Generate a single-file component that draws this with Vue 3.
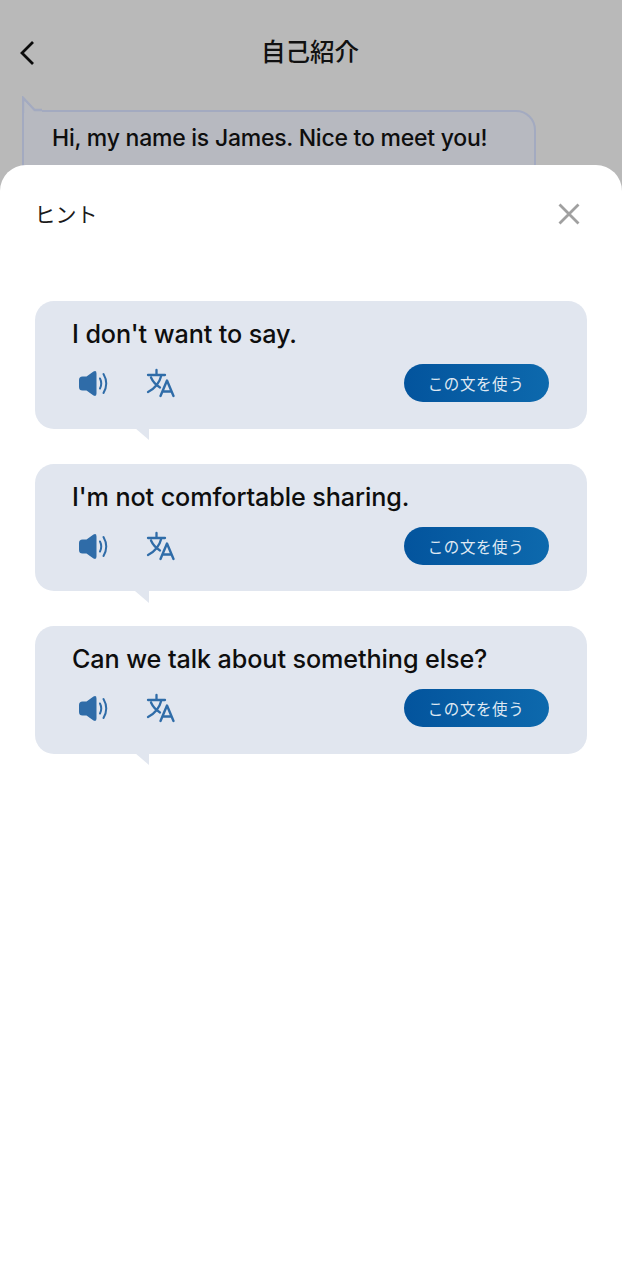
<script setup>
const hints = [
  "I don't want to say.",
  "I'm not comfortable sharing.",
  'Can we talk about something else?',
];
</script>

<template>
  <div class="page">
    <div class="backdrop">
      <header class="nav">
        <svg class="back" width="18" height="28" viewBox="0 0 18 28">
          <path d="M15 3 L4 14 L15 25" fill="none" stroke="#0b0b0b" stroke-width="2.8" />
        </svg>
        <h1>自己紹介</h1>
      </header>
      <div class="bubble">
        <svg class="bubble-tail" width="20" height="17" viewBox="0 0 20 17">
          <path d="M1.2 17 L1.2 2 L12.5 14 L20 14" fill="#b7b9c0" stroke="#a3aac0" stroke-width="2.5" />
          <path d="M2.5 17 L2.5 5 L12 15.3 L20 15.3 L20 17 Z" fill="#b7b9c0" />
        </svg>
        Hi, my name is James. Nice to meet you!
      </div>
    </div>

    <section class="sheet">
      <div class="sheet-head">
        <span class="sheet-title">ヒント</span>
        <svg width="24" height="24" viewBox="0 0 24 24">
          <path d="M2.5 2.5 L21.5 21.5 M21.5 2.5 L2.5 21.5" stroke="#a0a0a0" stroke-width="2.8" fill="none" />
        </svg>
      </div>

      <div class="hints">
        <div v-for="hint in hints" :key="hint" class="card">
          <p class="hint-text">{{ hint }}</p>
          <div class="actions">
            <svg class="speaker" width="32" height="28" viewBox="0 0 32 28">
              <path d="M2 11 Q2 7.5 5.5 7.5 L9.5 7.5 L16.5 2.5 Q19.5 1 19.5 4.5 L19.5 24.5 Q19.5 28 16.5 26.5 L9.5 21.5 L5.5 21.5 Q2 21.5 2 18 Z" fill="#2f6ca8" />
              <path d="M23 9.5 Q25.5 14.5 23 19.5 M26.5 5 Q32 14.5 26.5 24" fill="none" stroke="#2f6ca8" stroke-width="2" stroke-linecap="round" />
            </svg>
            <svg class="translate" width="30" height="30" viewBox="0 0 30 30">
              <path d="M2 7 H19 M10.5 2 V7 M15.5 7 C13.5 15 8 21 2 24 M5 9.5 C7 14 10 17 14 19.5" fill="none" stroke="#2f6ca8" stroke-width="2.3" stroke-linecap="round" />
              <path d="M14.5 28 L21 12.5 L27.5 28 M16.8 23.5 H25.2" fill="none" stroke="#2f6ca8" stroke-width="2.4" stroke-linecap="round" stroke-linejoin="round" />
            </svg>
            <button class="use-btn">この文を使う</button>
          </div>
          <svg class="card-tail" width="14" height="12" viewBox="0 0 14 12">
            <path d="M0 0 H14 V12 Z" fill="#e1e6ef" />
          </svg>
        </div>
      </div>
    </section>
  </div>
</template>

<style scoped>
.page {
  width: 622px;
  height: 1280px;
  position: relative;
  overflow: hidden;
  background: #fff;
  font-family: Inter, 'Noto Sans CJK JP', sans-serif;
}

.backdrop {
  height: 200px;
  background: #b9b9b9;
  display: flex;
  flex-direction: column;
}

.nav {
  height: 110px;
  flex-shrink: 0;
  display: flex;
  align-items: center;
  justify-content: center;
  position: relative;
  padding: 0 2px 10px 0;
  box-sizing: border-box;
}

.back {
  position: absolute;
  left: 18px;
  top: 39px;
}

.nav h1 {
  margin: 0;
  font-family: 'Noto Sans CJK JP', sans-serif;
  font-size: 24.5px;
  font-weight: 500;
  color: #111;
}

.bubble {
  position: relative;
  margin-left: 22px;
  width: 514px;
  box-sizing: border-box;
  height: 90px;
  padding: 11px 0 0 28px;
  background: #b7b9c0;
  border: 2.5px solid #a3aac0;
  border-radius: 0 20px 0 0;
  font-size: 23px;
  letter-spacing: -0.24px;
  line-height: 30px;
  font-weight: 450;
  color: #0e0e0e;
}

.bubble-tail {
  position: absolute;
  left: -2.5px;
  top: -16px;
}

.sheet {
  position: absolute;
  left: 0;
  right: 0;
  top: 165px;
  bottom: 0;
  background: #fff;
  border-radius: 26px 26px 0 0;
  padding: 0 34.5px;
}

.sheet-head {
  height: 100px;
  display: flex;
  align-items: flex-start;
  justify-content: space-between;
  padding-top: 37px;
  padding-right: 6.5px;
  box-sizing: border-box;
}

.sheet-title {
  font-family: 'Noto Sans CJK JP', sans-serif;
  font-size: 21px;
  line-height: 22px;
  color: #1a1a1a;
}

.hints {
  margin-top: 36px;
  display: flex;
  flex-direction: column;
  gap: 35px;
}

.card {
  position: relative;
  width: 552px;
  height: 127.5px;
  box-sizing: border-box;
  padding: 17px 37.5px 0;
  background: #e1e6ef;
  border-radius: 19px;
}

.hint-text {
  margin: 0;
  font-size: 25.2px;
  letter-spacing: -0.1px;
  line-height: 32px;
  font-weight: 450;
  color: #0e0e0e;
}

.actions {
  display: flex;
  align-items: center;
  margin-top: 14px;
  height: 38px;
}

.speaker {
  margin-left: 5px;
}

.translate {
  margin-left: 37px;
}

.use-btn {
  margin-left: auto;
  width: 145px;
  height: 38px;
  border: none;
  border-radius: 19px;
  background: linear-gradient(90deg, #03549d, #0d69ad);
  color: #dfe8f2;
  font-family: 'Noto Sans CJK JP', sans-serif;
  font-size: 15.5px;
  letter-spacing: 0.6px;
  padding: 0 1px 0 0;
}

.card-tail {
  position: absolute;
  left: 100px;
  top: 127px;
}
</style>
